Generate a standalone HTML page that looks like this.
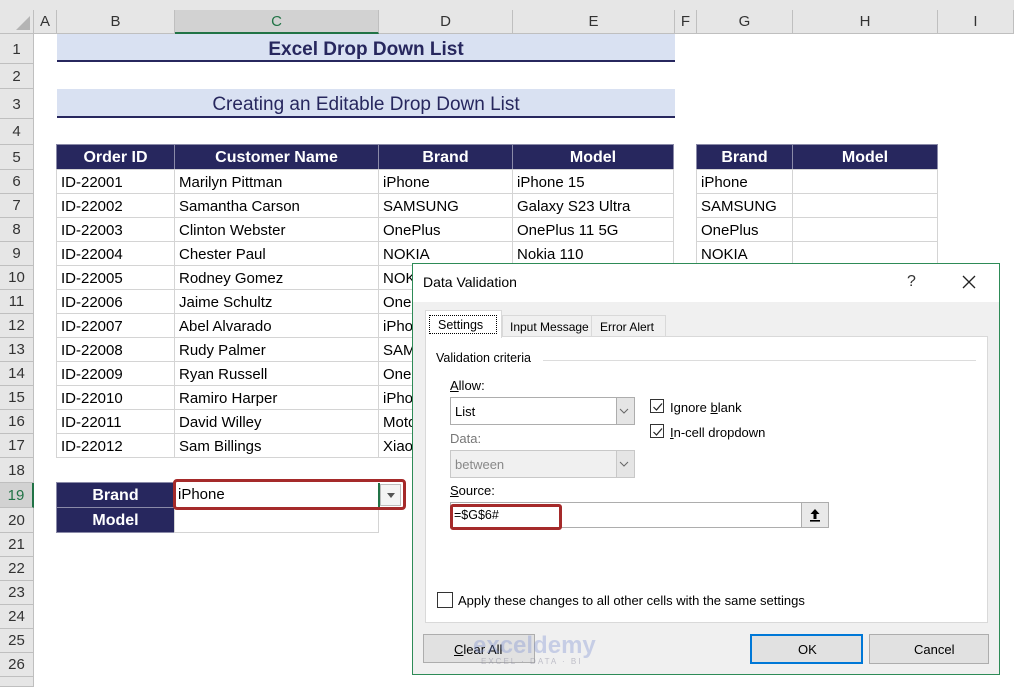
<!DOCTYPE html>
<html><head><meta charset="utf-8"><style>
*{box-sizing:border-box;margin:0;padding:0}
body{width:1014px;height:682px;position:relative;overflow:hidden;background:#fff;font-family:"Liberation Sans",sans-serif}
div{position:absolute}
.ch{top:10px;height:24px;background:#e6e6e6;border-right:1px solid #bfbfbf;border-bottom:1px solid #bfbfbf;font-size:15px;color:#333;text-align:center;line-height:23px}
.rh{left:0;width:34px;background:#e6e6e6;border-bottom:1px solid #bfbfbf;border-right:1px solid #bfbfbf;font-size:15px;color:#333;text-align:center}
.c{border:1px solid #d4d4d4;font-size:15px;color:#000;padding-left:4px;line-height:25px;white-space:nowrap;overflow:hidden;margin:-1px 0 0 -1px}
.h{background:#27275e;color:#fff;font-weight:bold;text-align:center;font-size:16px;padding:0;border:1px solid #8a8aa8;line-height:25px;margin:-1px 0 0 -1px}
.d{font-family:"Liberation Sans",sans-serif;font-size:13px;color:#000;white-space:nowrap}
</style></head><body>
<div style="left:0;top:0;width:1014px;height:10px;background:#e6e6e6"></div>
<div class="ch" style="left:0;width:34px"><div style="right:3px;bottom:3px;width:0;height:0;border-left:14px solid transparent;border-bottom:14px solid #b4b4b4"></div></div>
<div class="ch" style="left:34px;width:23px">A</div>
<div class="ch" style="left:57px;width:118px">B</div>
<div class="ch" style="left:175px;width:204px;background:#d2d2d2;border-bottom:2px solid #217346;color:#217346">C</div>
<div class="ch" style="left:379px;width:134px">D</div>
<div class="ch" style="left:513px;width:162px">E</div>
<div class="ch" style="left:675px;width:22px">F</div>
<div class="ch" style="left:697px;width:96px">G</div>
<div class="ch" style="left:793px;width:145px">H</div>
<div class="ch" style="left:938px;width:76px">I</div>

<div class="rh" style="top:34px;height:30px;line-height:32px">1</div>
<div class="rh" style="top:64px;height:25px;line-height:26px">2</div>
<div class="rh" style="top:89px;height:30px;line-height:32px">3</div>
<div class="rh" style="top:119px;height:26px;line-height:26px">4</div>
<div class="rh" style="top:145px;height:25px;line-height:25px">5</div>
<div class="rh" style="top:170px;height:24px;line-height:24px">6</div>
<div class="rh" style="top:194px;height:24px;line-height:24px">7</div>
<div class="rh" style="top:218px;height:24px;line-height:24px">8</div>
<div class="rh" style="top:242px;height:24px;line-height:24px">9</div>
<div class="rh" style="top:266px;height:24px;line-height:24px">10</div>
<div class="rh" style="top:290px;height:24px;line-height:24px">11</div>
<div class="rh" style="top:314px;height:24px;line-height:24px">12</div>
<div class="rh" style="top:338px;height:24px;line-height:24px">13</div>
<div class="rh" style="top:362px;height:24px;line-height:24px">14</div>
<div class="rh" style="top:386px;height:24px;line-height:24px">15</div>
<div class="rh" style="top:410px;height:24px;line-height:24px">16</div>
<div class="rh" style="top:434px;height:24px;line-height:24px">17</div>
<div class="rh" style="top:458px;height:25px;line-height:25px">18</div>
<div class="rh" style="top:483px;height:25px;line-height:25px;background:#d2d2d2;color:#217346;border-right:2px solid #217346">19</div>
<div class="rh" style="top:508px;height:25px;line-height:25px">20</div>
<div class="rh" style="top:533px;height:24px;line-height:24px">21</div>
<div class="rh" style="top:557px;height:24px;line-height:24px">22</div>
<div class="rh" style="top:581px;height:24px;line-height:24px">23</div>
<div class="rh" style="top:605px;height:24px;line-height:24px">24</div>
<div class="rh" style="top:629px;height:24px;line-height:24px">25</div>
<div class="rh" style="top:653px;height:24px;line-height:24px">26</div>
<div class="rh" style="top:677px;height:10px"></div>

<div style="left:57px;top:34px;width:618px;height:28px;background:#d9e1f2;border-bottom:2px solid #27275e;text-align:center;font-weight:bold;font-size:19px;color:#27275e;line-height:31px">Excel Drop Down List</div>
<div style="left:57px;top:89px;width:618px;height:29px;background:#d9e1f2;border-bottom:2px solid #27275e;text-align:center;font-size:19px;color:#27275e;line-height:32px">Creating an Editable Drop Down List</div>

<div class="h" style="left:57px;top:145px;width:119px;height:26px">Order ID</div>
<div class="h" style="left:175px;top:145px;width:205px;height:26px">Customer Name</div>
<div class="h" style="left:379px;top:145px;width:135px;height:26px">Brand</div>
<div class="h" style="left:513px;top:145px;width:162px;height:26px">Model</div>

<div class="c" style="left:57px;top:170px;width:119px;height:25px">ID-22001</div><div class="c" style="left:175px;top:170px;width:205px;height:25px">Marilyn Pittman</div><div class="c" style="left:379px;top:170px;width:135px;height:25px">iPhone</div><div class="c" style="left:513px;top:170px;width:162px;height:25px">iPhone 15</div>
<div class="c" style="left:57px;top:194px;width:119px;height:25px">ID-22002</div><div class="c" style="left:175px;top:194px;width:205px;height:25px">Samantha Carson</div><div class="c" style="left:379px;top:194px;width:135px;height:25px">SAMSUNG</div><div class="c" style="left:513px;top:194px;width:162px;height:25px">Galaxy S23 Ultra</div>
<div class="c" style="left:57px;top:218px;width:119px;height:25px">ID-22003</div><div class="c" style="left:175px;top:218px;width:205px;height:25px">Clinton Webster</div><div class="c" style="left:379px;top:218px;width:135px;height:25px">OnePlus</div><div class="c" style="left:513px;top:218px;width:162px;height:25px">OnePlus 11 5G</div>
<div class="c" style="left:57px;top:242px;width:119px;height:25px">ID-22004</div><div class="c" style="left:175px;top:242px;width:205px;height:25px">Chester Paul</div><div class="c" style="left:379px;top:242px;width:135px;height:25px">NOKIA</div><div class="c" style="left:513px;top:242px;width:162px;height:25px">Nokia 110</div>
<div class="c" style="left:57px;top:266px;width:119px;height:25px">ID-22005</div><div class="c" style="left:175px;top:266px;width:205px;height:25px">Rodney Gomez</div><div class="c" style="left:379px;top:266px;width:135px;height:25px">NOKIA</div>
<div class="c" style="left:57px;top:290px;width:119px;height:25px">ID-22006</div><div class="c" style="left:175px;top:290px;width:205px;height:25px">Jaime Schultz</div><div class="c" style="left:379px;top:290px;width:135px;height:25px">OnePlus</div>
<div class="c" style="left:57px;top:314px;width:119px;height:25px">ID-22007</div><div class="c" style="left:175px;top:314px;width:205px;height:25px">Abel Alvarado</div><div class="c" style="left:379px;top:314px;width:135px;height:25px">iPhone</div>
<div class="c" style="left:57px;top:338px;width:119px;height:25px">ID-22008</div><div class="c" style="left:175px;top:338px;width:205px;height:25px">Rudy Palmer</div><div class="c" style="left:379px;top:338px;width:135px;height:25px">SAMSUNG</div>
<div class="c" style="left:57px;top:362px;width:119px;height:25px">ID-22009</div><div class="c" style="left:175px;top:362px;width:205px;height:25px">Ryan Russell</div><div class="c" style="left:379px;top:362px;width:135px;height:25px">OnePlus</div>
<div class="c" style="left:57px;top:386px;width:119px;height:25px">ID-22010</div><div class="c" style="left:175px;top:386px;width:205px;height:25px">Ramiro Harper</div><div class="c" style="left:379px;top:386px;width:135px;height:25px">iPhone</div>
<div class="c" style="left:57px;top:410px;width:119px;height:25px">ID-22011</div><div class="c" style="left:175px;top:410px;width:205px;height:25px">David Willey</div><div class="c" style="left:379px;top:410px;width:135px;height:25px">Motorola</div>
<div class="c" style="left:57px;top:434px;width:119px;height:25px">ID-22012</div><div class="c" style="left:175px;top:434px;width:205px;height:25px">Sam Billings</div><div class="c" style="left:379px;top:434px;width:135px;height:25px">Xiaomi</div>

<div class="h" style="left:697px;top:145px;width:97px;height:26px">Brand</div>
<div class="h" style="left:793px;top:145px;width:146px;height:26px">Model</div>
<div class="c" style="left:697px;top:170px;width:97px;height:25px">iPhone</div><div class="c" style="left:793px;top:170px;width:146px;height:25px"></div>
<div class="c" style="left:697px;top:194px;width:97px;height:25px">SAMSUNG</div><div class="c" style="left:793px;top:194px;width:146px;height:25px"></div>
<div class="c" style="left:697px;top:218px;width:97px;height:25px">OnePlus</div><div class="c" style="left:793px;top:218px;width:146px;height:25px"></div>
<div class="c" style="left:697px;top:242px;width:97px;height:25px">NOKIA</div><div class="c" style="left:793px;top:242px;width:146px;height:25px"></div>

<div class="h" style="left:57px;top:483px;width:119px;height:26px">Brand</div>
<div class="h" style="left:57px;top:508px;width:119px;height:26px">Model</div>
<div class="c" style="left:175px;top:508px;width:205px;height:26px"></div>
<div class="c" style="left:175px;top:483px;width:205px;height:26px;border:none;line-height:26px">iPhone</div>
<div style="left:378px;top:483px;width:2px;height:25px;background:#217346"></div>
<div style="left:380px;top:484px;width:21px;height:22px;background:#f4f4f4;border:1px solid #bdbdbd"><div style="left:6px;top:8px;border-left:4px solid transparent;border-right:4px solid transparent;border-top:5px solid #555"></div></div>
<div style="left:173px;top:479px;width:233px;height:31px;border:3px solid #a52a2a;border-radius:4px"></div>

<div style="left:412px;top:263px;width:588px;height:412px;background:#f0f0f0;border:1px solid #2e8b57">
 <div style="left:0;top:0;width:586px;height:38px;background:#fff"></div>
 <div class="d" style="left:10px;top:10px;font-size:14px">Data Validation</div>
 <div class="d" style="left:494px;top:9px;font-size:16px;color:#333">?</div>
 <svg style="position:absolute;left:549px;top:11px" width="14" height="14"><path d="M1 1L13 13M13 1L1 13" stroke="#222" stroke-width="1.3"/></svg>
 <div style="left:12px;top:72px;width:563px;height:287px;background:#fff;border:1px solid #d9d9d9"></div>
 <div style="left:12px;top:46px;width:77px;height:28px;background:#fff;border:1px solid #d9d9d9;border-bottom:none"><div style="left:3px;top:4px;width:68px;height:19px;border:1px dotted #000"></div></div>
 <div class="d" style="left:25px;top:54px;font-size:12.5px">Settings</div>
 <div style="left:89px;top:51px;width:90px;height:22px;border:1px solid #d9d9d9;border-bottom:none"></div>
 <div class="d" style="left:97px;top:56px;font-size:12px">Input Message</div>
 <div style="left:178px;top:51px;width:75px;height:22px;border:1px solid #d9d9d9;border-bottom:none"></div>
 <div class="d" style="left:187px;top:56px;font-size:12px">Error Alert</div>
 <div class="d" style="left:23px;top:87px;font-size:12.5px">Validation criteria</div>
 <div style="left:130px;top:96px;width:433px;height:1px;background:#dcdcdc"></div>
 <div class="d" style="left:37px;top:114px"><u>A</u>llow:</div>
 <div style="left:37px;top:133px;width:185px;height:28px;background:#fff;border:1px solid #adadad"><div class="d" style="left:4px;top:6px">List</div><div style="right:0;top:0;width:18px;height:26px;background:#e5e5e5;border-left:1px solid #adadad"></div></div>
 <svg style="position:absolute;left:206px;top:144px" width="10" height="6"><path d="M1 1L5 5L9 1" stroke="#666" fill="none"/></svg>
 <div class="d" style="left:37px;top:167px;color:#777">Data:</div>
 <div style="left:37px;top:186px;width:185px;height:28px;background:#f0f0f0;border:1px solid #c8c8c8"><div class="d" style="left:4px;top:6px;color:#888">between</div><div style="right:0;top:0;width:18px;height:26px;background:#e5e5e5;border-left:1px solid #c8c8c8"></div></div>
 <svg style="position:absolute;left:206px;top:197px" width="10" height="6"><path d="M1 1L5 5L9 1" stroke="#666" fill="none"/></svg>
 <div style="left:237px;top:135px;width:14px;height:14px;background:#fff;border:1px solid #333"></div>
 <svg style="position:absolute;left:239px;top:137px" width="12" height="12"><path d="M1.5 6L4.5 9L10 2.5" stroke="#222" fill="none" stroke-width="1.2"/></svg>
 <div class="d" style="left:257px;top:136px">Ignore <u>b</u>lank</div>
 <div style="left:237px;top:160px;width:14px;height:14px;background:#fff;border:1px solid #333"></div>
 <svg style="position:absolute;left:239px;top:162px" width="12" height="12"><path d="M1.5 6L4.5 9L10 2.5" stroke="#222" fill="none" stroke-width="1.2"/></svg>
 <div class="d" style="left:257px;top:161px"><u>I</u>n-cell dropdown</div>
 <div class="d" style="left:37px;top:219px"><u>S</u>ource:</div>
 <div style="left:37px;top:238px;width:379px;height:26px;background:#fff;border:1px solid #adadad"><div class="d" style="left:3px;top:5px;font-size:12.5px">=$G$6#</div></div>
 <div style="left:388px;top:239px;width:27px;height:24px;background:#e9e9e9;border-left:1px solid #adadad"></div>
 <svg style="position:absolute;left:396px;top:244px" width="12" height="14"><path d="M6 1L1.5 6H4.5V11H7.5V6H10.5Z" fill="#000"/><rect x="1" y="12" width="10" height="1.6" fill="#000"/></svg>
 <div style="left:37px;top:240px;width:112px;height:26px;border:3px solid #a52a2a;border-radius:3px"></div>
 <div style="left:24px;top:328px;width:16px;height:16px;background:#fff;border:1px solid #333"></div>
 <div class="d" style="left:45px;top:329px">Apply these changes to all other cells with the same settings</div>
 <div style="left:10px;top:370px;width:112px;height:29px;background:#e1e1e1;border:1px solid #adadad"></div>
 <div class="d" style="left:41px;top:378px"><u>C</u>lear All</div>
 <div class="d" style="left:60px;top:368px;font-size:24px;font-weight:bold;color:rgba(120,140,210,0.35)">exceldemy</div>
 <div class="d" style="left:68px;top:393px;font-size:8px;color:rgba(140,140,160,0.5);letter-spacing:2px">EXCEL · DATA · BI</div>
 <div style="left:337px;top:370px;width:113px;height:30px;background:#e1e1e1;border:2px solid #0078d7"></div>
 <div class="d" style="left:385px;top:378px">OK</div>
 <div style="left:456px;top:370px;width:120px;height:30px;background:#e1e1e1;border:1px solid #adadad"></div>
 <div class="d" style="left:501px;top:378px">Cancel</div>
</div>
</body></html>
